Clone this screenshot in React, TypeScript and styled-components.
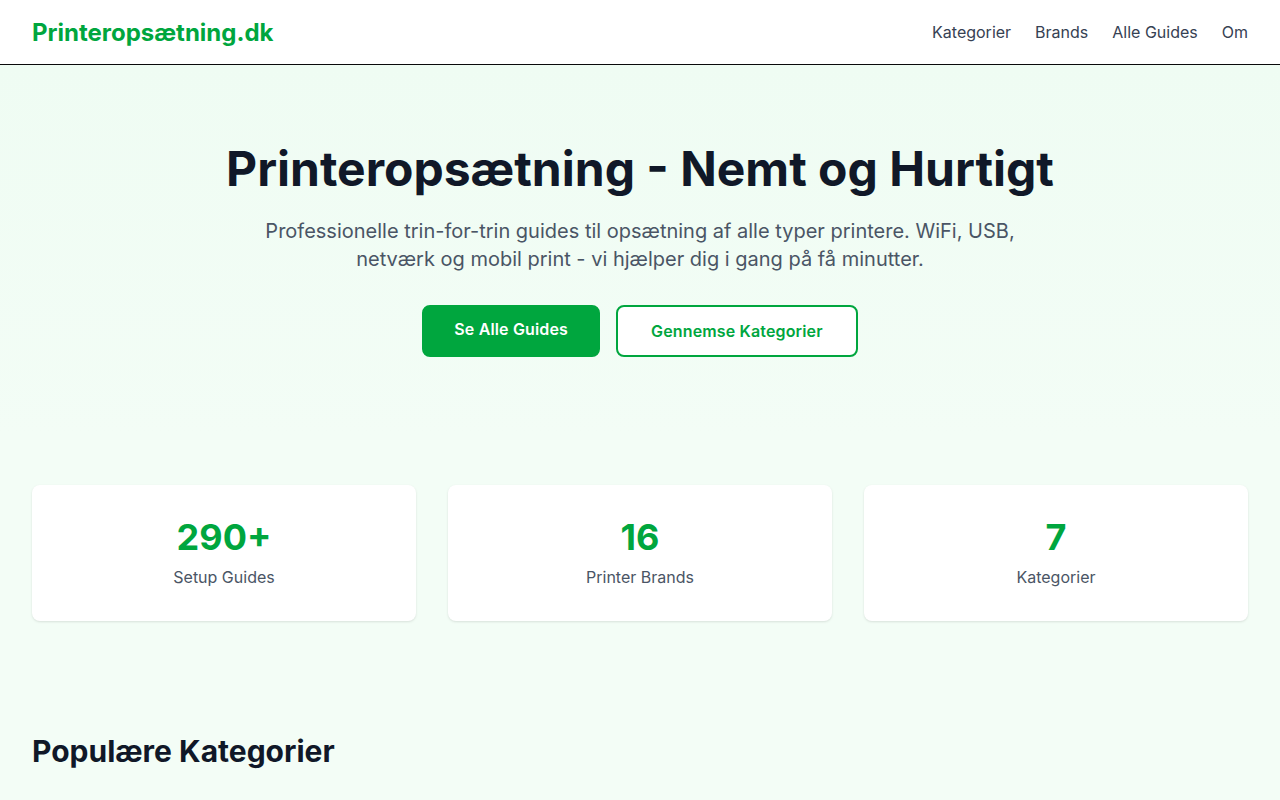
import React from 'react';
import styled, { createGlobalStyle } from 'styled-components';

const GlobalStyle = createGlobalStyle`
  * { box-sizing: border-box; }
  body {
    margin: 0;
    font-family: Inter, "Noto Sans", "Liberation Sans", sans-serif;
    background: #f3fdf6;
    color: #101828;
  }
  h1, h2, p { margin: 0; }
`;

const Header = styled.header`
  background: #ffffff;
  border-bottom: 1px solid #0a0a0a;
  box-shadow: 0 1px 3px rgba(0, 0, 0, 0.06);
`;

const HeaderInner = styled.div`
  max-width: 1280px;
  margin: 0 auto;
  padding: 0 32px;
  height: 64px;
  display: flex;
  align-items: center;
  justify-content: space-between;
`;

const Logo = styled.a`
  font-size: 24px;
  font-weight: 700;
  color: #00a63e;
  text-decoration: none;
`;

const Nav = styled.nav`
  display: flex;
  gap: 24px;
`;

const NavLink = styled.a`
  font-size: 16px;
  color: #364153;
  text-decoration: none;
`;

const Hero = styled.section`
  background: linear-gradient(180deg, #effcf3 0%, #f3fdf6 100%);
  padding: 80px 32px;
  text-align: center;
`;

const Title = styled.h1`
  font-size: 48px;
  line-height: 48px;
  font-weight: 700;
  color: #101828;
  margin-bottom: 24px;
`;

const Lead = styled.p`
  font-size: 20px;
  line-height: 28px;
  color: #4a5565;
  max-width: 768px;
  margin: 0 auto 32px;
`;

const Actions = styled.div`
  display: flex;
  justify-content: center;
  gap: 16px;
`;

const Button = styled.a<{ $variant: 'solid' | 'outline' }>`
  display: inline-block;
  font-size: 16px;
  line-height: 24px;
  font-weight: 600;
  letter-spacing: 0.15px;
  border-radius: 8px;
  text-decoration: none;
  border: 2px solid #00a63e;
  padding: ${p => (p.$variant === 'solid' ? '10px 30px 14px' : '12px 33px')};
  background: ${p => (p.$variant === 'solid' ? '#00a63e' : '#ffffff')};
  color: ${p => (p.$variant === 'solid' ? '#ffffff' : '#00a63e')};
`;

const Section = styled.section<{ $pad: string }>`
  max-width: 1280px;
  margin: 0 auto;
  padding: ${p => p.$pad};
`;

const StatsGrid = styled.div`
  display: grid;
  grid-template-columns: repeat(3, 1fr);
  gap: 32px;
`;

const StatCard = styled.div`
  background: #ffffff;
  border-radius: 8px;
  padding: 32px;
  text-align: center;
  box-shadow: 0 1px 3px rgba(0, 0, 0, 0.08), 0 1px 2px rgba(0, 0, 0, 0.04);
`;

const StatValue = styled.div`
  font-size: 36px;
  line-height: 40px;
  font-weight: 700;
  color: #00a63e;
  margin-bottom: 8px;
`;

const StatLabel = styled.div`
  font-size: 16px;
  line-height: 24px;
  color: #4a5565;
`;

const SectionTitle = styled.h2`
  font-size: 30px;
  line-height: 36px;
  font-weight: 700;
  color: #101828;
`;

const stats = [
  { value: '290+', label: 'Setup Guides' },
  { value: '16', label: 'Printer Brands' },
  { value: '7', label: 'Kategorier' },
];

const App: React.FC = () => (
  <>
    <GlobalStyle />
    <Header>
      <HeaderInner>
        <Logo href="#">Printeropsætning.dk</Logo>
        <Nav>
          <NavLink href="#">Kategorier</NavLink>
          <NavLink href="#">Brands</NavLink>
          <NavLink href="#">Alle Guides</NavLink>
          <NavLink href="#">Om</NavLink>
        </Nav>
      </HeaderInner>
    </Header>

    <Hero>
      <Title>Printeropsætning - Nemt og Hurtigt</Title>
      <Lead>
        Professionelle trin-for-trin guides til opsætning af alle typer printere. WiFi, USB,
        netværk og mobil print - vi hjælper dig i gang på få minutter.
      </Lead>
      <Actions>
        <Button $variant="solid" href="#">Se Alle Guides</Button>
        <Button $variant="outline" href="#">Gennemse Kategorier</Button>
      </Actions>
    </Hero>

    <Section $pad="48px 32px">
      <StatsGrid>
        {stats.map(s => (
          <StatCard key={s.label}>
            <StatValue>{s.value}</StatValue>
            <StatLabel>{s.label}</StatLabel>
          </StatCard>
        ))}
      </StatsGrid>
    </Section>

    <Section $pad="64px 32px">
      <SectionTitle>Populære Kategorier</SectionTitle>
    </Section>
  </>
);

export default App;
